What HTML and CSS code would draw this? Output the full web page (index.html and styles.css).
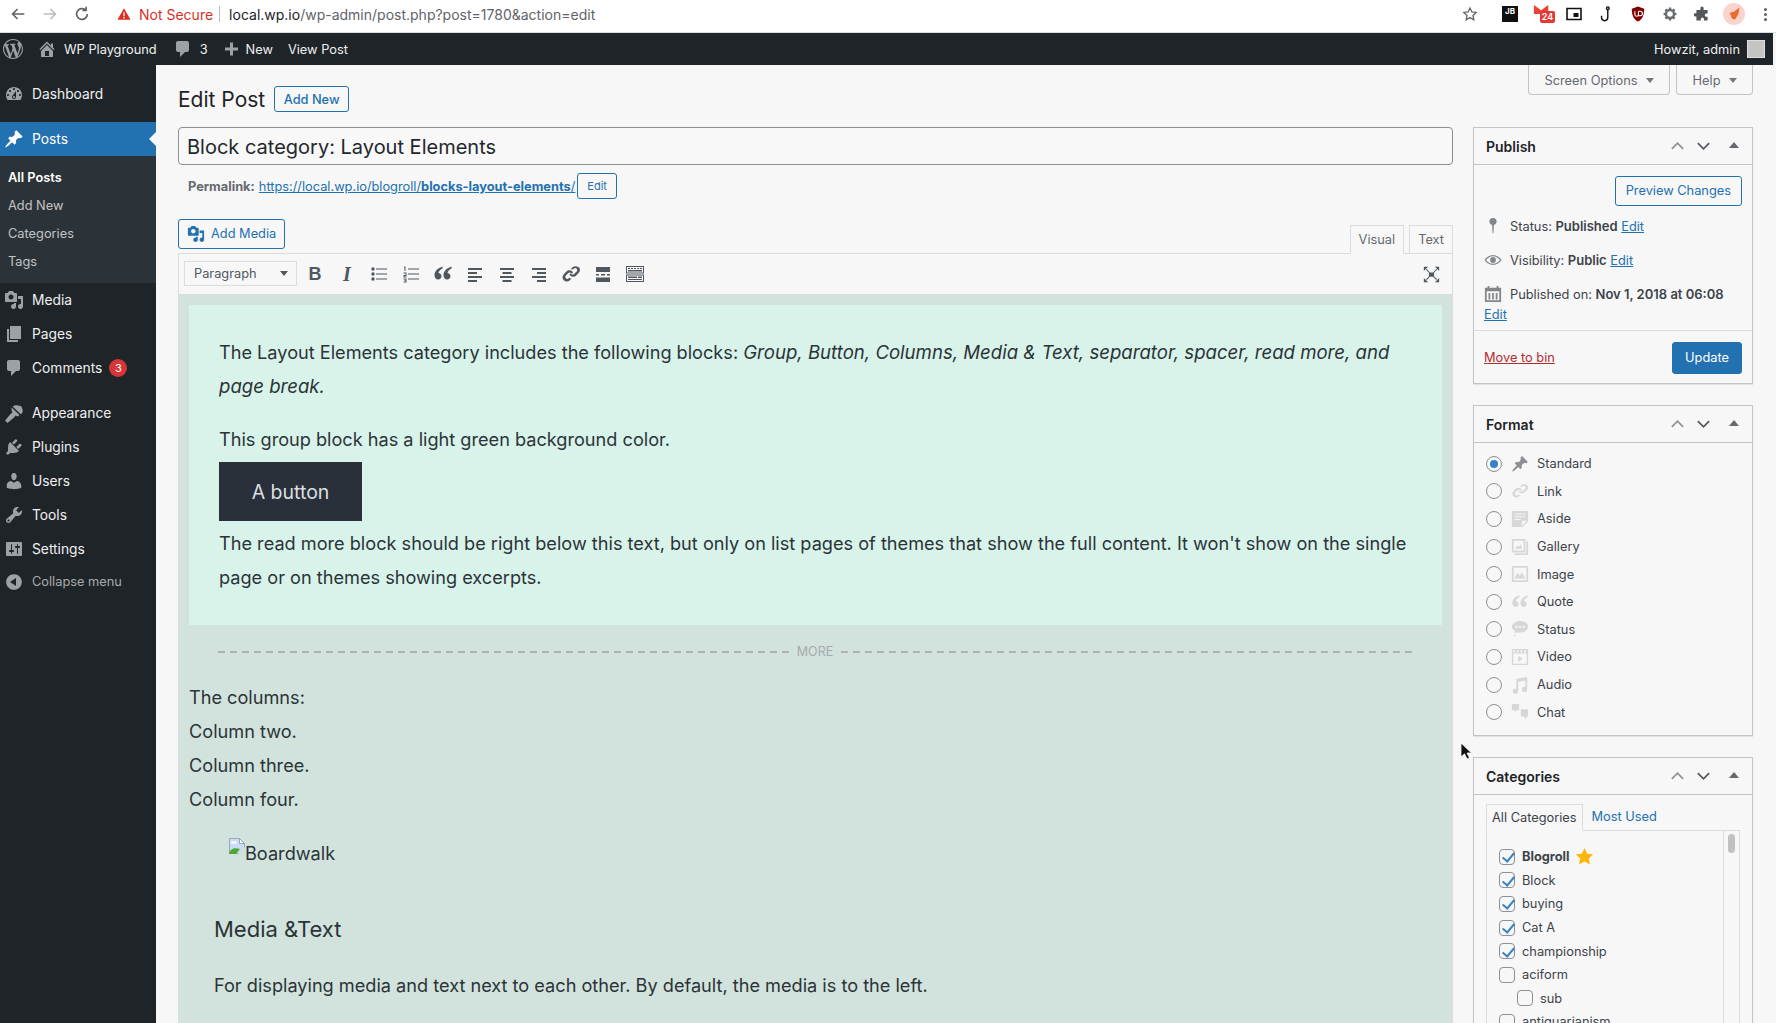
FILE: index.html
```html
<!DOCTYPE html>
<html lang="en">
<head>
  <meta charset="UTF-8">
  <meta name="viewport" content="width=device-width, initial-scale=1.0">
  <title>Edit Post | WP Playground</title>
  <link rel="stylesheet" href="styles.css">
</head>
<body>
  <svg class="defs" width="0" height="0">
    <symbol id="i-wp" viewBox="0 0 20 20"><path d="M20 10c0-5.510-4.490-10-10-10C4.480 0 0 4.490 0 10c0 5.520 4.480 10 10 10 5.510 0 10-4.480 10-10zM7.780 15.370L4.370 6.220c.55-.02 1.170-.08 1.170-.08.5-.06.44-1.130-.06-1.110 0 0-1.450.11-2.370.11-.18 0-.37 0-.58-.01C4.120 2.690 6.890 1.030 10 1.030c2.320 0 4.430.88 6.020 2.330-.67-.11-1.630.39-1.630 1.540 0 .71.430 1.310.87 2.030.35.600.550 1.350.550 2.450 0 1.490-1.400 5-1.400 5l-3.030-8.350c.54-.02.820-.17.820-.17.5-.05.44-1.250-.06-1.220 0 0-1.440.12-2.380.12-.87 0-2.330-.12-2.330-.12-.5-.03-.56 1.200-.06 1.220l.92.080 1.260 3.410zM17.410 10c.24-.64.740-1.870.43-4.250.7 1.290 1.050 2.710 1.050 4.250 0 3.290-1.730 6.160-4.370 7.800.97-2.570 1.930-5.160 2.890-7.800zM6.100 18.090C3.120 16.650 1.110 13.530 1.110 10c0-1.300.23-2.480.72-3.590 1.420 3.890 2.840 7.790 4.270 11.680zm4.030-6.630l2.580 6.980c-.87.29-1.780.46-2.710.46-.78 0-1.540-.11-2.250-.32.8-2.390 1.590-4.760 2.380-7.120z"/></symbol>
    <symbol id="i-home" viewBox="0 0 20 20"><path d="M16 8.500l1.530 1.530-1.060 1.060L10 4.620l-6.470 6.470-1.060-1.060L10 2.500l4 4v-2h2v4zm-6-2.460l6 5.990V18H4v-5.970zM12 17v-5H8v5h4z"/></symbol>
    <symbol id="i-comment" viewBox="0 0 20 20"><path d="M5 2h9c1.100 0 2 .9 2 2v7c0 1.100-.9 2-2 2h-2l-5 5v-5H5c-1.100 0-2-.9-2-2V4c0-1.100.9-2 2-2z"/></symbol>
    <symbol id="i-plus" viewBox="0 0 20 20"><path d="M17 7v3h-5v5H9v-5H4V7h5V2h3v5h5z" transform="translate(0 1.500)"/></symbol>
    <symbol id="i-dash" viewBox="0 0 20 20"><path d="M3.760 16h12.480c1.100-1.370 1.760-3.110 1.760-5 0-4.420-3.580-8-8-8s-8 3.580-8 8c0 1.890.66 3.630 1.760 5zM10 4c.55 0 1 .45 1 1s-.45 1-1 1-1-.45-1-1 .45-1 1-1zM6 6c.55 0 1 .45 1 1s-.45 1-1 1-1-.45-1-1 .45-1 1-1zm8 0c.55 0 1 .45 1 1s-.45 1-1 1-1-.45-1-1 .45-1 1-1zm-5.370 5.550L12 7v6c0 1.100-.9 2-2 2s-2-.9-2-2c0-.57.24-1.080.63-1.450zM4 10c.55 0 1 .45 1 1s-.45 1-1 1-1-.45-1-1 .45-1 1-1zm12 0c.55 0 1 .45 1 1s-.45 1-1 1-1-.45-1-1 .45-1 1-1zm-5 3c0-.55-.45-1-1-1s-1 .45-1 1 .45 1 1 1 1-.45 1-1z"/></symbol>
    <symbol id="i-pin" viewBox="0 0 20 20"><path d="M10.440 3.020l1.820-1.820 6.360 6.350-1.830 1.820c-1.050-.68-2.480-.57-3.410.36l-.75.75c-.92.93-1.040 2.350-.35 3.410l-1.830 1.820-2.410-2.410-2.800 2.790c-.42.42-3.380 2.710-3.800 2.290s1.860-3.390 2.280-3.810l2.790-2.790L4.100 9.360l1.830-1.820c1.050.69 2.480.57 3.400-.36l.75-.75c.93-.92 1.050-2.350.36-3.410z"/></symbol>
    <symbol id="i-media" viewBox="0 0 20 20"><path d="M13 11V4c0-.55-.45-1-1-1h-1.670L9 1H5L3.670 3H2c-.55 0-1 .45-1 1v7c0 .55.45 1 1 1h10c.55 0 1-.45 1-1zM7 4.500c1.380 0 2.500 1.120 2.500 2.500S8.380 9.500 7 9.500 4.500 8.380 4.500 7 5.620 4.500 7 4.500zM14 6h5v10.500c0 1.380-1.120 2.500-2.500 2.500S14 17.880 14 16.500s1.120-2.500 2.500-2.500c.17 0 .34.02.5.05V9h-3V6zm-4 8.050V13h2v3.500c0 1.380-1.120 2.500-2.500 2.500S7 17.880 7 16.500 8.120 14 9.500 14c.17 0 .34.02.5.05z"/></symbol>
    <symbol id="i-pages" viewBox="0 0 20 20"><path d="M6 15V2h11v13H6zm-1 1h9v2H3V5h2v11z"/></symbol>
    <symbol id="i-brush" viewBox="0 0 20 20"><path d="M8.500 3.500l8 7.500 1.500-.5c1-2 1-4 0-5.500l-.5-1.500c-1.500-1-3-.5-3.500-1-1-.5-2.500-.5-3.500 0zM7.500 4.500l8 7.500-1.500 1.500-2.500-1-1 1.500-7 6L1 17.500l6-7 1.500-1-1-2.500z"/></symbol>
    <symbol id="i-plug" viewBox="0 0 20 20"><path d="M13.110 4.360L9.870 7.600 8 5.730l3.240-3.240c.35-.34 1.050-.2 1.560.32.520.51.660 1.210.310 1.550zm-8 1.770l.91-1.120 9.010 9.010-1.190.84c-.71.71-2.630 1.160-3.820 1.160H6.140L4.900 17.260c-.59.59-1.540.59-2.120 0-.59-.58-.59-1.530 0-2.120l1.240-1.240v-3.880c0-1.130.4-3.050 1.090-3.890zm7.260 3.970l3.240-3.240c.34-.35 1.040-.21 1.550.31.52.51.66 1.210.31 1.550l-3.240 3.250z"/></symbol>
    <symbol id="i-user" viewBox="0 0 20 20"><path d="M10 9.250c-2.270 0-2.730-3.440-2.730-3.440C7 4.020 7.820 2 9.970 2c2.160 0 2.980 2.020 2.710 3.810 0 0-.41 3.440-2.680 3.440zm0 2.570L12.720 10c2.390 0 4.520 2.330 4.520 4.530v2.490s-3.650 1.130-7.240 1.130c-3.650 0-7.240-1.130-7.240-1.130v-2.490c0-2.250 1.940-4.480 4.150-4.480z"/></symbol>
    <symbol id="i-wrench" viewBox="0 0 20 20"><path d="M16.680 9.770c-1.340 1.340-3.300 1.670-4.950.99l-5.410 6.520c-.99.990-2.590.990-3.580 0s-.990-2.590 0-3.570l6.520-5.420c-.68-1.650-.35-3.610.99-4.950 1.280-1.280 3.120-1.620 4.720-1.060l-2.890 2.890 2.820 2.820 2.860-2.870c.53 1.580.18 3.400-1.080 4.670zM3.810 16.210c.4.390 1.030.39 1.420 0 .4-.4.400-1.030 0-1.430-.39-.39-1.020-.39-1.420 0-.39.4-.39 1.030 0 1.430z"/></symbol>
    <symbol id="i-settings" viewBox="0 0 20 20"><path d="M18 16V4c0-.55-.45-1-1-1H3c-.55 0-1 .45-1 1v12c0 .55.45 1 1 1h14c.55 0 1-.45 1-1zM8 11h1c.55 0 1 .45 1 1s-.45 1-1 1H8v1.500c0 .28-.22.5-.5.5s-.5-.22-.5-.5V13H6c-.55 0-1-.45-1-1s.45-1 1-1h1V5.500c0-.28.22-.5.5-.5s.5.22.5.5V11zm5-2h-1c-.55 0-1-.45-1-1s.45-1 1-1h1V5.500c0-.28.22-.5.5-.5s.5.22.5.5V7h1c.55 0 1 .45 1 1s-.45 1-1 1h-1v5.500c0 .28-.22.5-.5.5s-.5-.22-.5-.5V9z"/></symbol>
    <symbol id="i-collapse" viewBox="0 0 20 20"><path d="M10 2.160c4.330 0 7.840 3.510 7.840 7.840S14.330 17.840 10 17.840 2.160 14.330 2.160 10 5.670 2.160 10 2.160zm2 11.840V6l-6 4z"/></symbol>
    <symbol id="i-quote" viewBox="0 0 20 20"><path d="M9.500 2.500C5 4 1.500 7 1.500 11c0 2.800 1.500 4.500 3.500 4.500s3.500-1.400 3.500-3.300-1.400-3.200-3.100-3.200c.3-1.900 2.100-3.500 4.100-4.500zm9 0C14 4 10.500 7 10.500 11c0 2.800 1.500 4.500 3.500 4.500s3.500-1.400 3.500-3.300-1.400-3.200-3.100-3.200c.3-1.900 2.100-3.500 4.100-4.500z"/></symbol>
    <symbol id="i-link" viewBox="0 0 20 20"><path d="M17.740 2.760c1.680 1.690 1.680 4.410 0 6.080l-2.530 2.540c-1.680 1.680-4.410 1.680-6.080 0-.26-.26-.46-.55-.63-.85l1.170-1.170c.06-.06.13-.09.2-.13.08.27.22.53.44.74.77.77 2.030.77 2.800 0l2.530-2.530c.77-.77.77-2.030 0-2.800-.77-.77-2.030-.77-2.800 0l-.9.900c-.73-.28-1.520-.36-2.280-.25l1.720-1.720c1.680-1.680 4.400-1.680 6.080 0zM8.590 13.430l-.9.900c-.77.770-2.030.770-2.800 0-.77-.77-.77-2.030 0-2.800l2.540-2.530c.77-.77 2.020-.77 2.800 0 .21.210.36.470.44.740.07-.04.14-.07.2-.13l1.170-1.170c-.17-.3-.37-.59-.63-.85-1.680-1.680-4.400-1.680-6.080 0l-2.530 2.540c-1.680 1.680-1.680 4.400 0 6.080 1.670 1.680 4.400 1.680 6.080 0l1.720-1.720c-.76.110-1.550.03-2.010-.56z"/></symbol>
    <symbol id="i-aside" viewBox="0 0 20 20"><path d="M1 1h18v12l-6 6H1V1zm3 3v1h12V4H4zm0 3v1h12V7H4zm0 3v1h7v-1H4zm8 8l6-6h-6v6z"/></symbol>
    <symbol id="i-gallery" viewBox="0 0 20 20"><path d="M1 1h15v15H1V1zm2 2v11h11V3H3zm1.500 9l2.500-4 2 2 1.500-3 2 5h-8zM17 4h2v15H4v-2h13V4z"/></symbol>
    <symbol id="i-image" viewBox="0 0 20 20"><path d="M1 1h18v18H1V1zm2 2v14h14V3H3zm1 12l3-6 3 3 2-4 4 7H4z"/></symbol>
    <symbol id="i-status" viewBox="0 0 20 20"><path d="M10 1c5 0 9 2.700 9 6.500S15 14 10 14c-1 0-2-.1-3-.4L4 15l.5-2.800C2.300 11 1 9.400 1 7.500 1 3.700 5 1 10 1zM6 6.300a1.300 1.300 0 100 2.600 1.300 1.300 0 000-2.600zm4 0a1.300 1.300 0 100 2.600 1.300 1.300 0 000-2.600zm4 0a1.300 1.300 0 100 2.600 1.300 1.300 0 000-2.600zM3 17a1 1 0 102 0 1 1 0 00-2 0z"/></symbol>
    <symbol id="i-video" viewBox="0 0 20 20"><path d="M1 1h18v18H1V1zm1.500 5v11.500h15V6h-15zM8 8.500l5 3.500-5 3.500v-7zM3 2.500L2 5h2l1-2.500H3zm4 0L6 5h2l1-2.500H7zm4 0L10 5h2l1-2.500h-2zm4 0L14 5h2l1-2.500h-2z"/></symbol>
    <symbol id="i-audio" viewBox="0 0 20 20"><path d="M18 1v14c0 1.700-1.300 3-3 3s-3-1.300-3-3 1.300-3 3-3c.4 0 .7.100 1 .2V5L8 6.500V17c0 1.700-1.300 3-3 3s-3-1.300-3-3 1.300-3 3-3c.4 0 .7.100 1 .2V3l12-2z"/></symbol>
    <symbol id="i-chat" viewBox="0 0 20 20"><path d="M1 1h8v7H6l-2 2V8H1V1zm10 6h8v8h-2v3l-3-3h-3V7z"/></symbol>
    <symbol id="i-align" viewBox="0 0 20 20"><path d="M3 4h14v2H3zM3 8h9v2H3zM3 12h14v2H3zM3 16h9v2H3z"/></symbol>
    <symbol id="i-center" viewBox="0 0 20 20"><path d="M3 4h14v2H3zM5.500 8h9v2h-9zM3 12h14v2H3zM5.500 16h9v2h-9z"/></symbol>
    <symbol id="i-right" viewBox="0 0 20 20"><path d="M3 4h14v2H3zM8 8h9v2H8zM3 12h14v2H3zM8 16h9v2H8z"/></symbol>
    <symbol id="i-more" viewBox="0 0 20 20"><path d="M3 3h14v5H3zM3 10h3v1.500H3zM8 10h4v1.500H8zM14 10h3v1.500h-3zM3 13.500h14V18H3z"/></symbol>
    <symbol id="i-kitchen" viewBox="0 0 20 20"><path fill-rule="evenodd" d="M1 2h18v7.500H1V2zm1 1v5.500h16V3H2zm1 1h2v1H3V4zm3 0h2v1H6V4zm3 0h2v1H9V4zm3 0h2v1h-2V4zm3 0h2v1h-2V4zM3 6h14v1.500H3V6zM1 10.500h18V18H1v-7.500zm1 1V17h16v-5.500H2zm1 1h9V14H3v-1.500zm10 0h4V14h-4v-1.500zM3 15h14v1H3v-1z"/></symbol>
    <symbol id="i-full" viewBox="0 0 20 20"><path d="M1 1h5L1 6zM19 1v5l-5-5zM1 19v-5l5 5zM19 19h-5l5-5zM4.500 3.500L8 7.500h4l3.500-4 1 1-3.500 3.500v4l3.500 3.500-1 1L12 12.500H8l-3.500 4-1-1L7 12V8L3.500 4.500z"/></symbol>
  </svg>

  <header class="browser-bar">
    <svg class="nav-icon" viewBox="0 0 20 20"><path d="M17 10H4M9.500 4.500L4 10l5.500 5.500"/></svg>
    <svg class="nav-icon off" viewBox="0 0 20 20"><path d="M3 10h13M10.500 4.500L16 10l-5.500 5.500"/></svg>
    <svg class="nav-icon" viewBox="0 0 20 20"><path d="M16 10a6 6 0 11-2-4.500M14.500 2v4h-4"/></svg>
    <svg class="warn-icon" viewBox="0 0 16 16"><path d="M8 1.500L15.500 14.500H.5z"/><path class="warn-mark" d="M7.300 6h1.400v4.500H7.300zM7.300 11.500h1.400V13H7.300z"/></svg>
    <span class="not-secure">Not Secure</span>
    <span class="url-sep"></span>
    <span class="url"><b>local.wp.io</b>/wp-admin/post.php?post=1780&amp;action=edit</span>
    <div class="extensions">
      <svg class="ext star" viewBox="0 0 20 20"><path d="M10 2.500l2.300 5 5.400.6-4 3.700 1.100 5.400-4.800-2.700-4.800 2.700 1.100-5.400-4-3.700 5.400-.6z"/></svg>
      <span class="ext jb">JB</span>
      <span class="ext gmail"><svg viewBox="0 0 20 16"><path d="M1 1l8 6 8-6v11H1z"/><path class="gmail-v" d="M1 1l8 6 8-6"/></svg><i>24</i></span>
      <svg class="ext pip" viewBox="0 0 16 14"><path d="M1 1.500h14v11H1z"/><rect x="7.500" y="6" width="5" height="4"/></svg>
      <svg class="ext hook" viewBox="0 0 16 18"><circle cx="10" cy="2.500" r="1.500"/><path d="M10 4v9a3.500 3.500 0 01-7 0v-2"/></svg>
      <svg class="ext ublock" viewBox="0 0 16 18"><path d="M8 .5l7 2.500c0 7-2 12-7 14.500C3 15 1 10 1 3z"/><path class="ublock-mark" d="M4.500 6v3.500a2 2 0 004 0M8.500 6v5M8.500 6h2a2.500 2.500 0 010 5h-2"/></svg>
      <svg class="ext gear" viewBox="0 0 20 20"><circle cx="10" cy="10" r="5"/><path d="M10 2v3M10 15v3M2 10h3M15 10h3M4.300 4.300l2.200 2.200M13.500 13.500l2.200 2.200M15.700 4.300l-2.200 2.200M6.500 13.500l-2.200 2.200"/></svg>
      <svg class="ext puzzle" viewBox="0 0 20 20"><path d="M8 2.500a2 2 0 014 0V5h5v4.500h-1.500a2 2 0 000 4H17V18h-4.500v-1.500a2 2 0 00-4 0V18H3v-5H1.500a2 2 0 010-4H3V5h5z"/></svg>
      <span class="ext avatar"><svg viewBox="0 0 20 20"><path d="M15 4l-1 6-3 5-3-1-1-3-1-2 4-1z"/></svg></span>
      <span class="ext dots"></span>
    </div>
  </header>

  <nav class="adminbar">
    <svg class="ab-wp"><use href="#i-wp"/></svg>
    <a class="ab-item site"><svg><use href="#i-home"/></svg>WP Playground</a>
    <a class="ab-item comments"><svg><use href="#i-comment"/></svg>3</a>
    <a class="ab-item new"><svg><use href="#i-plus"/></svg>New</a>
    <a class="ab-item view">View Post</a>
    <a class="ab-item howdy">Howzit, admin<span class="ab-avatar"></span></a>
  </nav>

  <div class="wrap">
    <aside class="sidemenu">
      <ul class="menu">
        <li class="menu-item first"><svg><use href="#i-dash"/></svg>Dashboard</li>
        <li class="menu-item current"><svg><use href="#i-pin"/></svg>Posts</li>
        <li class="submenu">
          <a class="sub-on">All Posts</a>
          <a>Add New</a>
          <a>Categories</a>
          <a>Tags</a>
        </li>
        <li class="menu-item"><svg><use href="#i-media"/></svg>Media</li>
        <li class="menu-item"><svg><use href="#i-pages"/></svg>Pages</li>
        <li class="menu-item"><svg><use href="#i-comment"/></svg>Comments<span class="badge">3</span></li>
        <li class="menu-item gap"><svg><use href="#i-brush"/></svg>Appearance</li>
        <li class="menu-item"><svg><use href="#i-plug"/></svg>Plugins</li>
        <li class="menu-item"><svg><use href="#i-user"/></svg>Users</li>
        <li class="menu-item"><svg><use href="#i-wrench"/></svg>Tools</li>
        <li class="menu-item"><svg><use href="#i-settings"/></svg>Settings</li>
        <li class="menu-item collapse"><svg><use href="#i-collapse"/></svg>Collapse menu</li>
      </ul>
    </aside>

    <main class="content">
      <div class="screen-meta">
        <button class="meta-tab">Screen Options<i class="caret"></i></button>
        <button class="meta-tab">Help<i class="caret"></i></button>
      </div>

      <div class="page-head">
        <h1>Edit Post</h1>
        <a class="btn">Add New</a>
      </div>

      <div class="columns">
        <section class="primary">
          <input class="title-input" type="text" value="Block category: Layout Elements">
          <div class="permalink">
            <strong>Permalink:</strong>
            <a>https://local.wp.io/blogroll/<b>blocks-layout-elements</b>/</a>
            <span class="btn small">Edit</span>
          </div>

          <div class="editor-tools">
            <a class="btn media-btn"><svg><use href="#i-media"/></svg>Add Media</a>
            <div class="editor-tabs">
              <span class="editor-tab on">Visual</span>
              <span class="editor-tab">Text</span>
            </div>
          </div>

          <div class="editor">
            <div class="toolbar">
              <div class="format-select">Paragraph<i class="caret dark"></i></div>
              <span class="tb-btn tb-b">B</span>
              <span class="tb-btn tb-i">I</span>
              <span class="tb-btn">
                <svg viewBox="0 0 20 20"><path d="M7 4.500h11v1H7zM7 9.500h11v1H7zM7 14.500h11v1H7z"/><circle cx="4" cy="5" r="1.700"/><circle cx="4" cy="10" r="1.700"/><circle cx="4" cy="15" r="1.700"/></svg>
              </span>
              <span class="tb-btn">
                <svg viewBox="0 0 20 20"><path d="M7 4.500h11v1H7zM7 9.500h11v1H7zM7 14.500h11v1H7zM3 2.500h1.500V7H3.500V3.500H3zM2.500 8.500h3v3.500h-2v.5h2v1h-3V11h2v-1.500h-2zM2.500 14.500h3v4h-3v-1h2v-.5h-1v-.7h1v-.8h-2z"/></svg>
              </span>
              <span class="tb-btn"><svg><use href="#i-quote"/></svg></span>
              <span class="tb-btn"><svg><use href="#i-align"/></svg></span>
              <span class="tb-btn"><svg><use href="#i-center"/></svg></span>
              <span class="tb-btn"><svg><use href="#i-right"/></svg></span>
              <span class="tb-btn"><svg><use href="#i-link"/></svg></span>
              <span class="tb-btn"><svg><use href="#i-more"/></svg></span>
              <span class="tb-btn"><svg><use href="#i-kitchen"/></svg></span>
              <span class="tb-btn tb-full"><svg><use href="#i-full"/></svg></span>
            </div>

            <div class="editor-body">
              <div class="group">
                <p>The Layout Elements category includes the following blocks: <em>Group, Button, Columns, Media &amp; Text, separator, spacer, read more, and page break.</em></p>
                <p class="group-note">This group block has a light green background color.</p>
                <a class="block-button">A button</a>
                <p class="after-button">The read more block should be right below this text, but only on list pages of themes that show the full content. It won't show on the single page or on themes showing excerpts.</p>
              </div>

              <div class="more-sep"><span>MORE</span></div>

              <p>The columns:</p>
              <p>Column two.</p>
              <p>Column three.</p>
              <p>Column four.</p>

              <div class="broken-img">
                <svg viewBox="0 0 16 16"><path class="bi-page" d="M.5.5h10l5 5v10H.5z"/><path class="bi-fold" d="M10.500.5v5h5z"/><ellipse class="bi-cloud" cx="5" cy="4.500" rx="3" ry="1.300"/><path class="bi-hill" d="M0 16c1-5 5-7 11-5l-4 5z"/><path class="bi-cut" d="M9 16l7-7v7z"/></svg>Boardwalk
              </div>

              <h2>Media &amp;Text</h2>
              <p class="media-text">For displaying media and text next to each other. By default, the media is to the left.</p>
            </div>
          </div>
        </section>

        <aside class="side">
          <div class="postbox">
            <div class="postbox-head">
              <h2>Publish</h2>
              <svg class="pb-arrow faint" viewBox="0 0 16 10"><path d="M2 8l6-6 6 6"/></svg>
              <svg class="pb-arrow" viewBox="0 0 16 10"><path d="M2 2l6 6 6-6"/></svg>
              <i class="pb-toggle"></i>
            </div>
            <div class="publish-actions"><a class="btn preview">Preview Changes</a></div>
            <div class="misc status">
              <svg class="misc-icon" viewBox="0 0 20 20"><path d="M10 1a4 4 0 014 4c0 2-1.300 3.400-3 3.900L10.500 18h-1L9 8.900C7.300 8.400 6 7 6 5a4 4 0 014-4z"/></svg>
              <span>Status: <b>Published</b> <a>Edit</a></span>
            </div>
            <div class="misc">
              <svg class="misc-icon" viewBox="0 0 20 20"><path d="M10 4.500c4 0 7.500 2.500 9.500 5.500-2 3-5.500 5.500-9.500 5.500S2.500 13 .5 10c2-3 5.500-5.500 9.500-5.500zm0 1.200c-3.200 0-6 2-7.800 4.300 1.800 2.300 4.600 4.300 7.800 4.300s6-2 7.800-4.300c-1.800-2.300-4.600-4.300-7.800-4.300zM10 6.800a3.200 3.200 0 110 6.400 3.200 3.200 0 010-6.400z"/></svg>
              <span>Visibility: <b>Public</b> <a>Edit</a></span>
            </div>
            <div class="misc published">
              <svg class="misc-icon" viewBox="0 0 20 20"><path d="M4 1h2v2h8V1h2v2h3v16H1V3h3V1zM3 7v10h14V7H3zm2 2h2v7H5V9zm4 0h2v7H9V9zm4 0h2v7h-2V9z"/></svg>
              <span>Published on: <b>Nov 1, 2018 at 06:08</b> <a class="block-edit">Edit</a></span>
            </div>
            <div class="publish-foot">
              <a class="bin">Move to bin</a>
              <a class="btn primary-btn">Update</a>
            </div>
          </div>

          <div class="postbox">
            <div class="postbox-head">
              <h2>Format</h2>
              <svg class="pb-arrow faint" viewBox="0 0 16 10"><path d="M2 8l6-6 6 6"/></svg>
              <svg class="pb-arrow" viewBox="0 0 16 10"><path d="M2 2l6 6 6-6"/></svg>
              <i class="pb-toggle"></i>
            </div>
            <div class="formats">
              <label class="format"><input type="radio" name="fmt" checked><svg class="active"><use href="#i-pin"/></svg>Standard</label>
              <label class="format"><input type="radio" name="fmt"><svg><use href="#i-link"/></svg>Link</label>
              <label class="format"><input type="radio" name="fmt"><svg><use href="#i-aside"/></svg>Aside</label>
              <label class="format"><input type="radio" name="fmt"><svg><use href="#i-gallery"/></svg>Gallery</label>
              <label class="format"><input type="radio" name="fmt"><svg><use href="#i-image"/></svg>Image</label>
              <label class="format"><input type="radio" name="fmt"><svg><use href="#i-quote"/></svg>Quote</label>
              <label class="format"><input type="radio" name="fmt"><svg><use href="#i-status"/></svg>Status</label>
              <label class="format"><input type="radio" name="fmt"><svg><use href="#i-video"/></svg>Video</label>
              <label class="format"><input type="radio" name="fmt"><svg><use href="#i-audio"/></svg>Audio</label>
              <label class="format"><input type="radio" name="fmt"><svg><use href="#i-chat"/></svg>Chat</label>
            </div>
          </div>

          <div class="postbox">
            <div class="postbox-head">
              <h2>Categories</h2>
              <svg class="pb-arrow faint" viewBox="0 0 16 10"><path d="M2 8l6-6 6 6"/></svg>
              <svg class="pb-arrow" viewBox="0 0 16 10"><path d="M2 2l6 6 6-6"/></svg>
              <i class="pb-toggle"></i>
            </div>
            <div class="cat-wrap">
              <div class="cat-tabs">
                <span class="cat-tab on">All Categories</span>
                <a class="cat-tab">Most Used</a>
              </div>
              <div class="cat-panel">
                <div class="cat-list">
                  <label class="cat main"><input type="checkbox" checked>Blogroll<svg class="cat-star" viewBox="0 0 20 20"><path d="M10 1l2.800 6 6.400.7-4.700 4.400 1.300 6.400L10 15.300l-5.800 3.200 1.300-6.400L.8 7.700 7.200 7z"/></svg></label>
                  <label class="cat"><input type="checkbox" checked>Block</label>
                  <label class="cat"><input type="checkbox" checked>buying</label>
                  <label class="cat"><input type="checkbox" checked>Cat A</label>
                  <label class="cat"><input type="checkbox" checked>championship</label>
                  <label class="cat"><input type="checkbox">aciform</label>
                  <label class="cat child"><input type="checkbox">sub</label>
                  <label class="cat"><input type="checkbox">antiquarianism</label>
                </div>
                <div class="cat-scroll"><i></i></div>
              </div>
            </div>
          </div>
        </aside>
      </div>
    </main>
  </div>

  <svg class="cursor" viewBox="0 0 12 18"><path d="M1 1v14l3.500-3.200L7 17l2.500-1.200L7 11h4.500z"/></svg>
</body>
</html>
```

FILE: styles.css
```css
* {
  box-sizing: border-box;
}

body {
  margin: 0;
  height: 100vh;
  overflow: hidden;
  display: flex;
  flex-direction: column;
  font-family: Inter, "Liberation Sans", sans-serif;
  font-size: 12.800px;
  color: #3c434a;
  background-color: #f7f7f7;
}

h1, h2, p, ul {
  margin: 0;
  padding: 0;
}

a {
  color: #2271b1;
}

.defs {
  position: absolute;
}

/* browser chrome */
.browser-bar {
  height: 33px;
  flex: none;
  display: flex;
  align-items: center;
  padding: 0 0 4px 9px;
  background-color: #fff;
  border-bottom: 1px solid #dcdcdc;
  font-size: 14px;
}

.nav-icon {
  width: 18px;
  height: 18px;
  margin-right: 14px;
  fill: none;
  stroke: #5f6368;
  stroke-width: 1.8;
}

.nav-icon.off {
  stroke: #b9bcc0;
}

.warn-icon {
  width: 14px;
  height: 14px;
  margin-left: 12px;
  fill: #d93025;
}

.warn-mark {
  fill: #fff;
}

.not-secure {
  margin-left: 8px;
  color: #d93025;
}

.url-sep {
  width: 1px;
  height: 16px;
  margin: 0 9px 0 6px;
  background-color: #bbb;
}

.url {
  color: #5f6368;
}

.url b {
  font-weight: 400;
  color: #202124;
}

.extensions {
  margin-left: auto;
  display: flex;
  align-items: center;
  gap: 16px;
}

.ext {
  width: 16px;
  height: 16px;
  display: block;
  flex: none;
}

.star {
  margin-right: 8px;
  fill: none;
  stroke: #5f6368;
  stroke-width: 1.6;
}

.jb {
  background-color: #111;
  color: #fff;
  font-size: 8px;
  font-weight: 700;
  line-height: 11px;
  text-align: center;
}

.gmail {
  position: relative;
}

.gmail svg {
  position: absolute;
  left: -1px;
  top: -3px;
  width: 18px;
  height: 15px;
  fill: #ea4335;
}

.gmail-v {
  fill: none;
  stroke: #fff;
  stroke-width: 1.200;
}

.gmail i {
  position: absolute;
  left: 6px;
  top: 5px;
  width: 15px;
  height: 12px;
  border-radius: 2px;
  background-color: #e53935;
  color: #fff;
  font-size: 9px;
  font-style: normal;
  font-weight: 600;
  line-height: 12px;
  text-align: center;
}

.pip {
  fill: none;
  stroke: #111;
  stroke-width: 1.6;
}

.pip rect {
  fill: #111;
  stroke: none;
}

.hook {
  fill: none;
  stroke: #111;
  stroke-width: 1.6;
}

.ublock {
  fill: #800000;
}

.ublock-mark {
  fill: none;
  stroke: #fff;
  stroke-width: 1.200;
}

.gear {
  fill: none;
  stroke: #6a6d70;
  stroke-width: 3;
}

.puzzle {
  fill: #55585b;
}

.avatar {
  width: 22px;
  height: 22px;
  margin: 0 -3px;
  border-radius: 50%;
  background-color: #fbd3cd;
}

.avatar svg {
  display: block;
  width: 22px;
  height: 22px;
  fill: #ee6a2c;
}

.dots {
  width: 3px;
  height: 3px;
  margin: 0 9px 0 6px;
  border-radius: 50%;
  background-color: #5f6368;
  box-shadow: 0 -5px 0 #5f6368, 0 5px 0 #5f6368;
}

/* admin bar */
.adminbar {
  height: 32px;
  flex: none;
  display: flex;
  align-items: center;
  margin-right: 3px;
  background-color: #1f2428;
  color: #f0f0f1;
}

.adminbar svg {
  width: 20px;
  height: 20px;
  fill: #9ca1a6;
}

.ab-wp {
  margin-left: 3px;
}

.ab-item {
  display: flex;
  align-items: center;
  color: #f0f0f1;
}

.ab-item svg {
  margin-right: 5px;
}

.site {
  margin-left: 14px;
}

.site svg {
  margin-right: 7px;
}

.comments {
  margin-left: 16px;
}

.comments svg {
  margin-right: 7px;
}

.new {
  margin-left: 13px;
}

.view {
  margin-left: 15px;
}

.howdy {
  margin-left: auto;
  margin-right: 8px;
}

.ab-avatar {
  width: 18px;
  height: 18px;
  margin-left: 7px;
  background-color: #c4c4c4;
  border: 1px solid #ddd;
}

/* side menu */
.wrap {
  flex: 1;
  min-height: 0;
  display: flex;
}

.sidemenu {
  width: 156px;
  flex: none;
  background-color: #1f2428;
}

.menu {
  list-style: none;
  padding-top: 12px;
  color: #f0f0f1;
  font-size: 13.800px;
}

.menu-item {
  height: 34px;
  display: flex;
  align-items: center;
  padding: 0 0 1px 4px;
}

.menu-item svg {
  width: 20px;
  height: 20px;
  margin-right: 8px;
  fill: #9ca1a6;
}

.menu-item.first {
  margin-bottom: 11px;
}

.menu-item.current {
  position: relative;
  background-color: #2271b1;
  color: #fff;
}

.menu-item.current svg {
  fill: #fff;
}

.menu-item.current::after {
  content: "";
  position: absolute;
  right: 0;
  top: 10px;
  border: 7px solid transparent;
  border-left: 0;
  border-right-color: #f7f7f7;
}

.menu-item.gap {
  margin-top: 11px;
}

.menu-item.collapse {
  color: #a7aaad;
  font-size: 12.800px;
  height: 32px;
}

.submenu {
  height: 127px;
  padding-top: 8px;
  background-color: #2c3338;
  font-size: 12.800px;
}

.submenu a {
  display: block;
  height: 28px;
  line-height: 28px;
  padding-left: 8px;
  color: #c3c4c7;
}

.submenu .sub-on {
  color: #fff;
  font-weight: 600;
}

.badge {
  width: 18px;
  height: 18px;
  margin-left: 7px;
  border-radius: 50%;
  background-color: #d63638;
  color: #fff;
  font-size: 11px;
  line-height: 18px;
  text-align: center;
}

/* main column */
.content {
  flex: 1;
  min-width: 0;
  padding: 0 23px 0 22px;
}

.screen-meta {
  height: 30px;
  margin-bottom: -9px;
  display: flex;
  justify-content: flex-end;
  gap: 6px;
}

.meta-tab {
  height: 30px;
  padding: 1px 15.500px 0;
  font: inherit;
  color: #646970;
  background-color: #f7f7f7;
  border: 1px solid #c3c4c7;
  border-top: 0;
  border-radius: 0 0 4px 4px;
}

.caret {
  display: inline-block;
  margin-left: 8px;
  vertical-align: 2px;
  border: 4px solid transparent;
  border-top: 5px solid #72777c;
  border-bottom: 0;
}

.page-head {
  height: 26px;
  display: flex;
  align-items: center;
  gap: 9px;
}

h1 {
  font-size: 21px;
  font-weight: 400;
  color: #1d2327;
}

.btn {
  display: inline-block;
  padding: 0 8.500px;
  height: 26px;
  line-height: 25px;
  font-size: 12.800px;
  font-weight: 500;
  color: #2271b1;
  background-color: #f7f7f7;
  border: 1px solid #2271b1;
  border-radius: 3px;
}

.columns {
  display: flex;
  gap: 20px;
  margin-top: 15px;
}

.primary {
  flex: 1;
  min-width: 0;
}

.title-input {
  display: block;
  width: 100%;
  height: 38px;
  padding: 1px 8px 0;
  font-family: inherit;
  font-size: 20px;
  color: #23282d;
  background-color: #f8f8f8;
  border: 1px solid #8c8f94;
  border-radius: 4px;
}

.permalink {
  height: 26px;
  margin-top: 8px;
  padding-left: 10px;
  display: flex;
  align-items: center;
  gap: 4px;
  color: #646970;
}

.permalink a {
  text-decoration: underline;
}

.permalink b {
  font-weight: 700;
}

.btn.small {
  height: 26px;
  margin-left: -2px;
  padding: 0 9px;
  font-size: 11px;
  font-weight: 400;
}

.editor-tools {
  height: 34px;
  margin-top: 20px;
  display: flex;
  justify-content: space-between;
}

.media-btn {
  height: 30px;
  line-height: 28px;
  padding: 0 8px;
  display: flex;
  align-items: center;
  font-weight: 400;
}

.media-btn svg {
  width: 18px;
  height: 18px;
  margin-right: 6px;
  fill: #2271b1;
}

.editor-tabs {
  display: flex;
  align-items: flex-end;
  gap: 5px;
  position: relative;
  top: 1px;
}

.editor-tab {
  height: 29px;
  padding: 0 8px;
  line-height: 27px;
  color: #646970;
  background-color: #f7f7f7;
  border: 1px solid #dcdcde;
}

.editor-tab.on {
  border-bottom-color: #f7f7f7;
}

.editor {
  border: 1px solid #dcdcde;
  border-bottom: 0;
}

.toolbar {
  height: 40px;
  display: flex;
  align-items: center;
  padding-left: 5px;
}

.format-select {
  width: 113px;
  height: 25px;
  margin-top: -1px;
  margin-right: 2px;
  padding: 0 8px 0 9px;
  display: flex;
  align-items: center;
  justify-content: space-between;
  border: 1px solid #dcdcde;
  color: #50575e;
}

.caret.dark {
  border-top-color: #50575e;
}

.tb-btn {
  width: 32px;
  height: 28px;
  display: flex;
  align-items: center;
  justify-content: center;
  color: #50575e;
  font-size: 18px;
}

.tb-btn svg {
  width: 20px;
  height: 20px;
  fill: #50575e;
}

.tb-b {
  font-family: "Liberation Sans", sans-serif;
  font-weight: 700;
}

.tb-i {
  font-family: "Liberation Serif", serif;
  font-style: italic;
  font-weight: 700;
  font-size: 20px;
}

.tb-full {
  margin-left: auto;
  margin-right: 5px;
}

.tb-btn.tb-full svg {
  width: 17px;
  height: 17px;
}

.editor-body {
  height: 740px;
  padding: 11px 10px 0 10px;
  background-color: #d1e3dc;
  color: #2c3338;
  font-size: 18.150px;
  line-height: 34px;
}

.editor-body em {
  font-size: 18.600px;
  line-height: 1;
}

.group {
  padding: 30px 30px 31px;
  background-color: #d8f3ea;
}

.group-note {
  margin-top: 19px;
}

.block-button {
  display: block;
  width: 143px;
  height: 59px;
  margin-top: 6px;
  background-color: #2a3039;
  color: #dcdfe2;
  font-size: 19.500px;
  line-height: 60px;
  text-align: center;
}

.after-button {
  margin-top: 5px;
}

.more-sep {
  height: 20px;
  margin: 17px 30px 18px 29px;
  display: flex;
  align-items: center;
  gap: 8px;
  color: #a7aaad;
  font-size: 12.500px;
  line-height: 20px;
}

.more-sep::before,
.more-sep::after {
  content: "";
  flex: 1;
  height: 2px;
  background-image: repeating-linear-gradient(90deg, #aeb3b0 0, #aeb3b0 7px, transparent 7px, transparent 12px);
}

.broken-img {
  margin: 20px 0 0 40px;
  display: flex;
  align-items: flex-start;
}

.broken-img svg {
  width: 16px;
  height: 16px;
  margin-top: 2px;
}

.bi-page {
  fill: #cbdcf8;
  stroke: #9aa5b5;
  stroke-width: 1;
}

.bi-fold {
  fill: #fff;
  stroke: #9aa5b5;
  stroke-width: 1;
}

.bi-cloud {
  fill: #fff;
}

.bi-hill {
  fill: #4ea92e;
}

.bi-cut {
  fill: #d1e3dc;
}

.editor-body h2 {
  margin: 42px 0 0 25px;
  font-size: 22px;
  font-weight: 400;
  line-height: 34px;
}

.media-text {
  margin: 22px 0 0 25px;
}

/* side boxes */
.side {
  width: 280px;
  flex: none;
}

.postbox {
  margin-bottom: 21px;
  background-color: #f7f7f7;
  border: 1px solid #c3c4c7;
  box-shadow: 0 1px 1px rgba(0,0,0,0.08);
}

.postbox-head {
  height: 37px;
  display: flex;
  align-items: center;
  padding: 0 10px 0 12px;
  border-bottom: 1px solid #c3c4c7;
}

.postbox-head h2 {
  flex: 1;
  font-size: 14px;
  font-weight: 600;
  color: #1d2327;
}

.pb-arrow {
  width: 15px;
  height: 10px;
  margin-right: 11px;
  fill: none;
  stroke: #50575e;
  stroke-width: 1.800;
}

.pb-arrow.faint {
  stroke: #8c8f94;
}

.pb-toggle {
  margin: 0 3px 3px 7px;
  border: 5px solid transparent;
  border-top: 0;
  border-bottom: 6px solid #646970;
}

.publish-actions {
  padding: 11px 10px 0;
  text-align: right;
}

.preview {
  height: 30px;
  line-height: 28px;
  padding: 0 10px;
  font-weight: 400;
}

.misc {
  height: 34px;
  padding-left: 10px;
  display: flex;
  align-items: center;
  position: relative;
}

.misc.status {
  margin-top: 3px;
}

.misc > span {
  margin-left: 26px;
}

.misc b {
  font-size: 13px;
  font-weight: 600;
}

.misc a,
.bin {
  text-decoration: underline;
}

.misc-icon {
  position: absolute;
  left: 10px;
  top: 8px;
  width: 18px;
  height: 18px;
  fill: #82878c;
}

.misc.published {
  height: 53px;
  align-items: flex-start;
  padding-top: 7px;
  line-height: 20px;
}

.misc.published > span {
  margin-left: 0;
  text-indent: 26px;
}

.block-edit {
  display: block;
  text-indent: 0;
}

.publish-foot {
  height: 53px;
  padding: 0 10px;
  display: flex;
  align-items: center;
  justify-content: space-between;
  border-top: 1px solid #dcdcde;
}

.bin {
  color: #b32d2e;
}

.primary-btn {
  height: 32px;
  margin-top: 1px;
  padding: 0 12px;
  line-height: 30px;
  color: #fff;
  background-color: #2271b1;
  border-radius: 3px;
  font-weight: 400;
}

.formats {
  height: 292px;
  padding: 7px 0 0 12px;
}

.format {
  height: 27.600px;
  display: flex;
  align-items: center;
}

.format svg {
  width: 18px;
  height: 18px;
  margin-right: 8px;
  fill: #d6d7d9;
}

.format svg.active {
  fill: #8c8f94;
}

input[type="radio"],
input[type="checkbox"] {
  appearance: none;
  margin: 0;
  flex: none;
  width: 16px;
  height: 16px;
  background-color: #f7f7f7;
  border: 1px solid #8c8f94;
  position: relative;
}

input[type="radio"] {
  margin-right: 9px;
  border-radius: 50%;
}

input[type="radio"]:checked::before {
  content: "";
  position: absolute;
  left: 3px;
  top: 3px;
  width: 8px;
  height: 8px;
  border-radius: 50%;
  background-color: #3582c4;
}

input[type="checkbox"] {
  margin-right: 7px;
  border-radius: 4px;
}

input[type="checkbox"]:checked::before {
  content: "";
  position: absolute;
  left: 4.500px;
  top: 0.500px;
  width: 5px;
  height: 10px;
  border: solid #3582c4;
  border-width: 0 2px 2px 0;
  transform: rotate(40deg);
}

.cat-wrap {
  padding: 9px 12px 0 12px;
}

.cat-tabs {
  height: 26px;
  display: flex;
  position: relative;
  z-index: 1;
}

.cat-tab {
  height: 27px;
  padding: 0 5px;
  line-height: 25px;
}

.cat-tab.on {
  color: #3c434a;
  background-color: #f7f7f7;
  border: 1px solid #dcdcde;
  border-bottom-color: #f7f7f7;
}

a.cat-tab {
  margin-left: 4px;
}

.cat-panel {
  height: 300px;
  display: flex;
  border: 1px solid #dcdcde;
}

.cat-list {
  flex: 1;
  padding: 14px 0 0 12px;
}

.cat {
  height: 23.600px;
  display: flex;
  align-items: center;
}

.cat.main {
  font-weight: 700;
}

.cat.child {
  padding-left: 18px;
}

.cat-star {
  width: 19px;
  height: 19px;
  margin-left: 5px;
  fill: #fbb60a;
}

.cat-scroll {
  width: 16px;
  padding: 3px 4px;
  border-left: 1px solid #dcdcde;
}

.cat-scroll i {
  display: block;
  height: 19px;
  border-radius: 4px;
  background-color: #c1c1c1;
}

.cursor {
  position: absolute;
  left: 1460px;
  top: 742px;
  width: 12px;
  height: 18px;
  fill: #111;
  stroke: #fff;
  stroke-width: 0.800;
}
```
